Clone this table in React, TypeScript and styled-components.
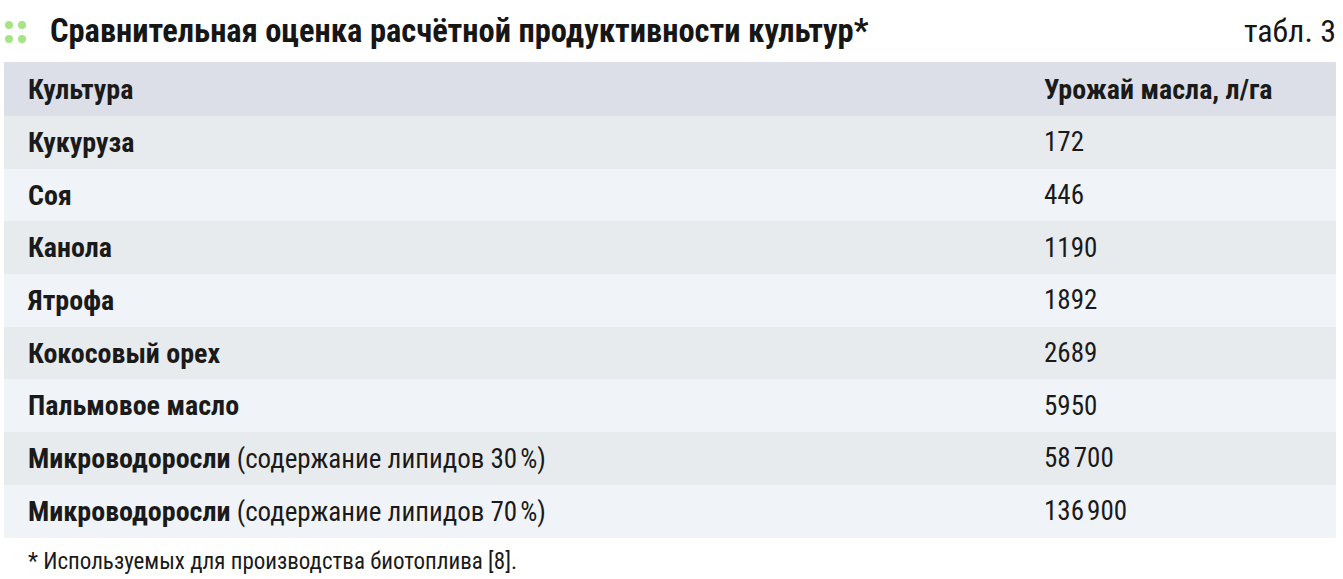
import React from 'react';
import styled, { createGlobalStyle } from 'styled-components';

const GlobalStyle = createGlobalStyle`
  html, body {
    margin: 0;
    padding: 0;
    background: #fff;
  }
  body {
    font-family: "Roboto Condensed", Roboto, sans-serif;
    font-stretch: 75%;
    color: #1a1a1a;
  }
`;

const Page = styled.div`
  width: 1343px;
  height: 579px;
  padding: 0 7px 0 4px;
  box-sizing: border-box;
`;

const TitleBar = styled.div`
  display: flex;
  align-items: center;
  height: 62px;
`;

const Dots = styled.div`
  display: grid;
  grid-template-columns: 8px 8px;
  gap: 6px 5px;
  margin: 2px 24px 0 1px;
  span {
    width: 8px;
    height: 8px;
    border-radius: 50%;
    background: #a6e682;
  }
`;

const Title = styled.h1`
  flex: 1;
  margin: 0;
  font-size: 32.5px;
  font-weight: 700;
  color: #161616;
`;

const TableLabel = styled.span`
  font-size: 32px;
  font-weight: 400;
  color: #161616;
`;

const Table = styled.div`
  display: flex;
  flex-direction: column;
`;

const Row = styled.div<{ $tone: 'head' | 'odd' | 'even' }>`
  display: grid;
  grid-template-columns: 1016px 1fr;
  align-items: center;
  height: 52.7px;
  background: ${p => (p.$tone === 'head' ? '#dcdfe7' : p.$tone === 'odd' ? '#e8ebee' : '#f0f3f7')};
  font-size: 28px;
  padding-left: 24px;
  &:first-child {
    height: 54px;
  }
`;

const Name = styled.div`
  font-weight: 700;
  span {
    font-size: 27px;
    font-weight: 400;
  }
`;

const Value = styled.div<{ $bold?: boolean }>`
  font-size: ${p => (p.$bold ? 28 : 27)}px;
  font-weight: ${p => (p.$bold ? 700 : 400)};
`;

const Note = styled.p`
  margin: 10px 0 0 24px;
  font-size: 23px;
`;

const rows: [string, string | null, string][] = [
  ['Кукуруза', null, '172'],
  ['Соя', null, '446'],
  ['Канола', null, '1190'],
  ['Ятрофа', null, '1892'],
  ['Кокосовый орех', null, '2689'],
  ['Пальмовое масло', null, '5950'],
  ['Микроводоросли', '(содержание липидов 30\u202F%)', '58\u202F700'],
  ['Микроводоросли', '(содержание липидов 70\u202F%)', '136\u202F900'],
];

export default function App() {
  return (
    <>
      <GlobalStyle />
      <Page>
        <TitleBar>
          <Dots>
            <span />
            <span />
            <span />
            <span />
          </Dots>
          <Title>Сравнительная оценка расчётной продуктивности культур*</Title>
          <TableLabel>табл. 3</TableLabel>
        </TitleBar>
        <Table>
          <Row $tone="head">
            <Name>Культура</Name>
            <Value $bold>Урожай масла, л/га</Value>
          </Row>
          {rows.map(([name, extra, value], i) => (
            <Row key={i} $tone={i % 2 === 0 ? 'odd' : 'even'}>
              <Name>
                {name}
                {extra && <span> {extra}</span>}
              </Name>
              <Value>{value}</Value>
            </Row>
          ))}
        </Table>
        <Note>* Используемых для производства биотоплива [8].</Note>
      </Page>
    </>
  );
}
